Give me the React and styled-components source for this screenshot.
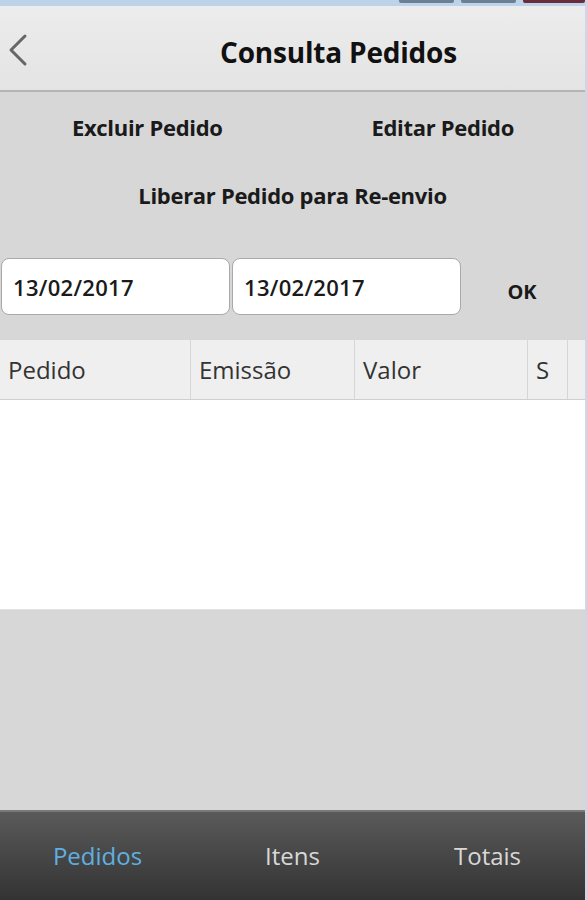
import React from "react";
import styled, { createGlobalStyle } from "styled-components";

const Global = createGlobalStyle`
  html, body { margin: 0; padding: 0; }
  body { font-family: "Open Sans", "DejaVu Sans", sans-serif; background: #d7d7d7; }
  * { box-sizing: border-box; }
`;

const Screen = styled.div`
  width: 587px;
  height: 900px;
  display: flex;
  flex-direction: column;
  background: #d7d7d7;
  border-right: 2px solid #c9d9ec;
  overflow: hidden;
`;

const WindowStrip = styled.div`
  height: 6px;
  background: #bcd3ea;
  display: flex;
  justify-content: flex-end;
  gap: 7px;
`;

const WinBtn = styled.div`
  width: ${p => p.$w}px;
  height: 3px;
  background: ${p => p.$c};
  border-radius: 0 0 2px 2px;
`;

const Header = styled.header`
  height: 86px;
  background: linear-gradient(#ececec, #e4e4e4);
  border-bottom: 2px solid #b4b4b4;
  display: grid;
  grid-template-columns: 60px 1fr 60px;
  align-items: center;
`;

const Back = styled.div`
  display: flex;
  align-items: center;
  padding-left: 6px;
  padding-top: 4px;
`;

const Title = styled.h1`
  margin: 0;
  text-align: center;
  font-size: 28px;
  font-weight: 700;
  color: #111;
  padding-left: 92px;
  padding-top: 8px;
  letter-spacing: -0.2px;
  white-space: nowrap;
`;

const Actions = styled.div`
  display: grid;
  grid-template-columns: 1fr 1fr;
  padding-top: 20px;
  row-gap: 38px;
`;

const ActionBtn = styled.div`
  text-align: center;
  font-size: 22px;
  font-weight: 700;
  color: #1a1a1a;
  grid-column: ${p => (p.$wide ? "1 / span 2" : "auto")};
  padding-left: ${p => p.$pl || 0}px;
  letter-spacing: -0.3px;
`;

const FilterRow = styled.div`
  display: flex;
  align-items: center;
  gap: 2px;
  padding-left: 1px;
  margin-top: 48px;
`;

const DateInput = styled.div`
  width: 229px;
  height: 57px;
  background: #fff;
  border: 1px solid #a9a9a9;
  border-radius: 8px;
  display: flex;
  align-items: center;
  padding-left: 11px;
  font-size: 22px;
  font-weight: 600;
  color: #1a1a1a;
  letter-spacing: 0.3px;
`;

const OkBtn = styled.div`
  flex: 1;
  text-align: center;
  font-size: 20px;
  font-weight: 700;
  color: #1a1a1a;
  padding-top: 10px;
  padding-right: 4px;
`;

const Table = styled.div`
  margin-top: 25px;
  background: #fff;
  height: 270px;
  border-bottom: 1px solid #e2e2e2;
`;

const HeadRow = styled.div`
  display: grid;
  grid-template-columns: 191px 164px 173px 40px 1fr;
  height: 60px;
  background: #efefef;
  border-bottom: 1px solid #cfcfcf;
`;

const HeadCell = styled.div`
  display: flex;
  align-items: center;
  padding-left: 8px;
  font-size: 24px;
  color: #333;
  border-right: ${p => (p.$last ? "none" : "1px solid #d6d6d6")};
`;

const Spacer = styled.div`
  flex: 1;
`;

const TabBar = styled.nav`
  height: 90px;
  background: linear-gradient(#5a5a5a, #333);
  border-top: 2px solid #7a7a7a;
  display: grid;
  grid-template-columns: 195px 195px 1fr;
  align-items: center;
`;

const Tab = styled.div`
  text-align: center;
  font-size: 24px;
  color: ${p => (p.$active ? "#5fb0e0" : "#d8d8d8")};
  padding-bottom: 2px;
`;

export default function App() {
  return (
    <>
      <Global />
      <Screen>
        <WindowStrip>
          <WinBtn $w={55} $c="#6d7f95" />
          <WinBtn $w={55} $c="#6d7f95" />
          <WinBtn $w={62} $c="#6a2b3b" />
        </WindowStrip>
        <Header>
          <Back>
            <svg width="24" height="34" viewBox="0 0 24 34" fill="none">
              <path d="M19 3 L5 17 L19 31" stroke="#666" strokeWidth="3" strokeLinecap="round" strokeLinejoin="round" />
            </svg>
          </Back>
          <Title>Consulta Pedidos</Title>
          <div />
        </Header>
        <Actions>
          <ActionBtn $pl={2}>Excluir Pedido</ActionBtn>
          <ActionBtn $pl={8}>Editar Pedido</ActionBtn>
          <ActionBtn $wide>Liberar Pedido para Re-envio</ActionBtn>
        </Actions>
        <FilterRow>
          <DateInput>13/02/2017</DateInput>
          <DateInput>13/02/2017</DateInput>
          <OkBtn>OK</OkBtn>
        </FilterRow>
        <Table>
          <HeadRow>
            <HeadCell>Pedido</HeadCell>
            <HeadCell>Emissão</HeadCell>
            <HeadCell>Valor</HeadCell>
            <HeadCell>S</HeadCell>
            <HeadCell $last />
          </HeadRow>
        </Table>
        <Spacer />
        <TabBar>
          <Tab $active>Pedidos</Tab>
          <Tab>Itens</Tab>
          <Tab>Totais</Tab>
        </TabBar>
      </Screen>
    </>
  );
}
